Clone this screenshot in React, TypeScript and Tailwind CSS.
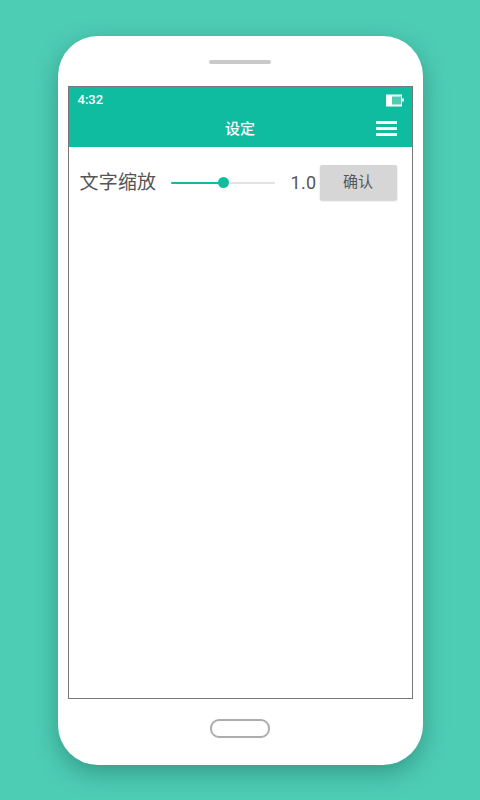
export default function App() {
  return (
    <div className="w-[480px] h-[800px] overflow-hidden bg-[#4ecdb5] pt-[36px] pl-[58px] font-['Roboto','Noto_Sans_CJK_SC',sans-serif]">
      {/* phone body */}
      <div className="w-[365px] h-[729px] bg-white rounded-[40px] shadow-[0_8px_24px_rgba(0,60,50,0.35)] flex flex-col items-center">
        <div className="mt-[24px] ml-[-2px] w-[62px] h-[4px] rounded-full bg-[#c9c9c9]" />
        <div className="mt-[22px] ml-[-1px] w-[345px] h-[613px] border border-[#777777] flex flex-col">
          <div className="h-[60px] bg-[#10bc9f] flex flex-col">
            <div className="h-[25px] flex items-center justify-between pl-[9px] pr-[8px] pt-[1px]">
              <span className="text-[13px] font-medium text-white">4:32</span>
              <svg width="18" height="13" viewBox="0 0 18 13">
                <rect x="0" y="0.5" width="16" height="12" fill="#ffffff" />
                <rect x="6" y="2.5" width="9" height="8" fill="#4ecdb5" />
                <rect x="16" y="4.5" width="2" height="3" fill="#ffffff" />
              </svg>
            </div>
            <div className="relative flex-1 flex items-center justify-center">
              <span className="text-[15px] font-medium text-white">设定</span>
              <div className="absolute right-[15px] top-[9px] w-[21px] flex flex-col gap-[3px]">
                <div className="h-[3px] bg-white" />
                <div className="h-[3px] bg-white" />
                <div className="h-[3px] bg-white" />
              </div>
            </div>
          </div>
          <div className="flex items-center pl-[11px] pt-[18px]">
            <span className="w-[77px] text-[19px] leading-[35px] tracking-[0.2px] text-[#555555]">文字缩放</span>
            <div className="relative ml-[14px] w-[104px] h-[2px] bg-[#e2e2e2] rounded-full">
              <div className="w-[52px] h-full bg-[#10bc9f] rounded-full" />
              <div className="absolute left-[47px] top-[-5px] w-[11px] h-[11px] rounded-full bg-[#10bc9f]" />
            </div>
            <span className="ml-[16px] w-[29px] text-[18px] tracking-[0.3px] text-[#555555]">1.0</span>
            <button className="w-[77px] h-[35px] bg-[#d6d6d6] rounded-[2px] shadow-[0_1px_2px_rgba(0,0,0,0.2)] text-[15px] text-[#555555]">
              确认
            </button>
          </div>
        </div>
        <div className="mt-[20px] ml-[-1px] w-[60px] h-[19px] rounded-[9px] border-2 border-[#adadad]" />
      </div>
    </div>
  );
}
